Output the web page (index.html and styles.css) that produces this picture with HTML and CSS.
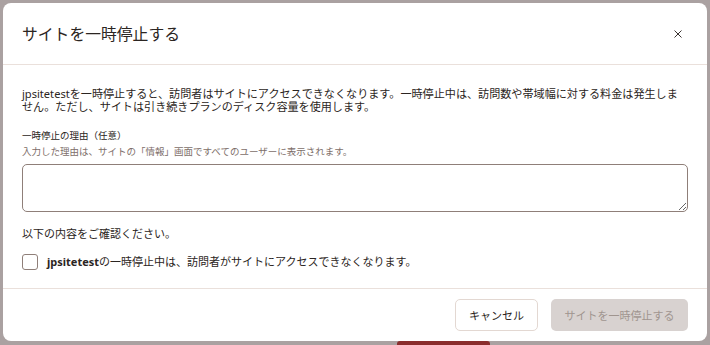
FILE: index.html
```html
<!DOCTYPE html>
<html lang="ja">
<head>
    <meta charset="UTF-8">
    <meta name="viewport" content="width=device-width, initial-scale=1.0">
    <title>サイトを一時停止する</title>
    <link rel="stylesheet" href="styles.css">
</head>
<body>
    <div class="backdrop">
        <div class="behind-button"></div>

        <div class="modal">
            <div class="modal-header">
                <h2 class="modal-title">サイトを一時停止する</h2>
                <button class="close-button" aria-label="閉じる">
                    <svg width="8" height="8" viewBox="0 0 8 8">
                        <path d="M0.5 0.5 L7.5 7.5 M7.5 0.5 L0.5 7.5" stroke="#3a3330" stroke-width="1" fill="none"/>
                    </svg>
                </button>
            </div>

            <div class="modal-body">
                <p class="intro">jpsitetestを一時停止すると、訪問者はサイトにアクセスできなくなります。一時停止中は、訪問数や帯域幅に対する料金は発生しま<wbr>せん。ただし、サイトは引き続きプランのディスク容量を使用します。</p>

                <label class="field-label" for="reason">一時停止の理由（任意）</label>
                <div class="field-help">入力した理由は、サイトの「情報」画面ですべてのユーザーに表示されます。</div>
                <textarea id="reason" class="reason-input"></textarea>

                <p class="confirm-title">以下の内容をご確認ください。</p>
                <label class="confirm-row">
                    <input type="checkbox" class="confirm-check">
                    <span><b>jpsitetest</b>の一時停止中は、訪問者がサイトにアクセスできなくなります。</span>
                </label>
            </div>

            <div class="modal-footer">
                <button class="button button-cancel">キャンセル</button>
                <button class="button button-primary" disabled>サイトを一時停止する</button>
            </div>
        </div>
    </div>
</body>
</html>
```

FILE: styles.css
```css
html, body {
    margin: 0;
    height: 100%;
}
body {
    font-family: "Noto Sans", "Noto Sans CJK JP", sans-serif;
    background-color: #aaa1a1;
    color: #2b2522;
    overflow: hidden;
}
.backdrop {
    position: relative;
    padding: 3px;
    height: 100%;
    box-sizing: border-box;
}
.behind-button {
    position: absolute;
    left: 397px;
    bottom: -4px;
    width: 93px;
    height: 8px;
    border-radius: 3px;
    background-color: #8a2d2d;
}
.modal {
    position: relative;
    width: 704px;
    height: 338px;
    background-color: #fff;
    border-radius: 8px;
    display: flex;
    flex-direction: column;
    box-sizing: border-box;
}
.modal-header {
    height: 62px;
    padding: 0 21px 0 19px;
    display: flex;
    align-items: center;
    justify-content: space-between;
    border-bottom: 1px solid #eae0db;
    box-sizing: border-box;
}
.modal-title {
    margin: 0;
    font-size: 15.8px;
    font-weight: 400;
}
.close-button {
    border: none;
    background: none;
    padding: 4px;
    display: flex;
    cursor: pointer;
}
.modal-body {
    padding: 22px 19px 18px;
    display: flex;
    flex-direction: column;
}
.intro {
    margin: 0 5px 0 0;
    font-size: 11.1px;
    line-height: 13px;
}
.field-label {
    margin-top: 16px;
    font-size: 9.5px;
    line-height: 14px;
}
.field-help {
    margin-top: 2px;
    font-size: 9.5px;
    line-height: 14px;
    color: #7d6e69;
}
.reason-input {
    display: block;
    margin-top: 5px;
    height: 48px;
    border: 1px solid #8f7f79;
    border-radius: 5px;
    box-sizing: border-box;
    font-family: inherit;
}
.confirm-title {
    margin: 14px 0 0;
    font-size: 11px;
    line-height: 16px;
}
.confirm-row {
    margin-top: 12px;
    display: flex;
    align-items: center;
    gap: 9px;
    font-size: 11px;
    line-height: 16px;
}
.confirm-check {
    appearance: none;
    margin: 0;
    width: 16px;
    height: 16px;
    border: 1px solid #8f7f79;
    border-radius: 3px;
    background: #fff;
}
.modal-footer {
    flex: 1;
    border-top: 1px solid #eae0db;
    padding: 0 19px;
    display: flex;
    align-items: center;
    justify-content: flex-end;
    gap: 13px;
}
.button {
    height: 32px;
    padding: 0;
    box-sizing: border-box;
    white-space: nowrap;
    font-family: inherit;
    font-size: 11px;
    border-radius: 5px;
    cursor: pointer;
}
.button-cancel {
    width: 83px;
    background-color: #fff;
    color: #2b2522;
    border: 1px solid #e3d8d2;
}
.button-primary {
    width: 137px;
    background-color: #d8d2d0;
    color: #a0958f;
    border: none;
}
```
